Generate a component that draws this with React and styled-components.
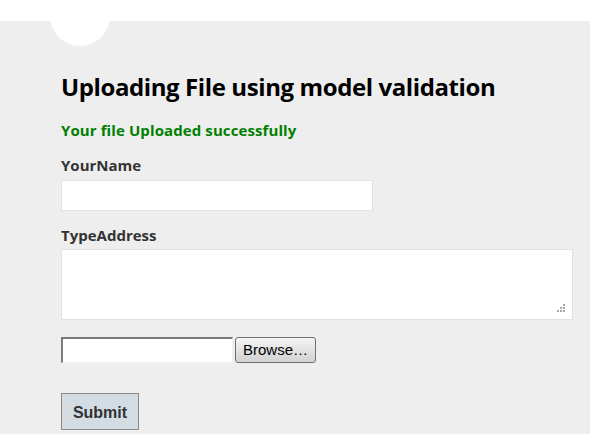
import React from "react";
import styled, { createGlobalStyle } from "styled-components";

const Global = createGlobalStyle`
  html, body { margin: 0; padding: 0; background: #eeeeee; }
  body { font-family: "Open Sans", "Noto Sans", sans-serif; }
`;

const Header = styled.header`
  position: relative;
  height: 21px;
  background: #ffffff;
`;

const Logo = styled.div`
  position: absolute;
  left: 50px;
  top: -14px;
  width: 60px;
  height: 60px;
  border-radius: 50%;
  background: #ffffff;
`;

const Main = styled.main`
  padding: 48px 18px 0 61px;
  display: flex;
  flex-direction: column;
  align-items: flex-start;
`;

const Title = styled.h2`
  margin: 0;
  font-size: 24px;
  line-height: 36px;
  font-weight: 700;
  color: #000;
  letter-spacing: -0.4px;
`;

const Success = styled.p`
  margin: 15px 0 0;
  font-size: 15px;
  line-height: 20px;
  font-weight: 700;
  color: #008000;
  letter-spacing: 0.1px;
`;

const Label = styled.label`
  display: block;
  margin-top: ${(p) => p.$top || 0}px;
  font-size: 15px;
  line-height: 20px;
  font-weight: 700;
  color: #333333;
`;

const TextBox = styled.input`
  box-sizing: border-box;
  margin-top: 5px;
  width: 312px;
  height: 31px;
  border: 1px solid #e2e2e2;
  background: #fff;
  outline: none;
`;

const AreaWrap = styled.div`
  position: relative;
  margin-top: 4px;
  width: 512px;
  height: 71px;
`;

const TextArea = styled.textarea`
  display: block;
  box-sizing: border-box;
  width: 100%;
  height: 100%;
  margin: 0;
  border: 1px solid #e2e2e2;
  background: #fff;
  outline: none;
  resize: none;
`;

const Grip = styled.svg`
  position: absolute;
  right: 7px;
  bottom: 7px;
  width: 10px;
  height: 10px;
  pointer-events: none;
`;

const FileRow = styled.div`
  display: flex;
  align-items: stretch;
  gap: 2px;
  margin-top: 17px;
  height: 26px;
`;

const FileField = styled.div`
  box-sizing: border-box;
  width: 172px;
  background: #fff;
  border-top: 2px solid #7a7a7a;
  border-left: 2px solid #7a7a7a;
  border-right: 1px solid #f2f2f2;
  border-bottom: 1px solid #f2f2f2;
`;

const BrowseButton = styled.button`
  box-sizing: border-box;
  width: 81px;
  height: 26px;
  padding: 0 0 2px;
  font-family: "Liberation Sans", Arial, sans-serif;
  font-size: 15px;
  color: #000;
  border: 1px solid #707070;
  border-radius: 3px;
  background: linear-gradient(#f4f4f4, #e2e2e2 50%, #d2d2d2);
`;

const SubmitButton = styled.button`
  box-sizing: border-box;
  margin-top: 30px;
  width: 78px;
  height: 37px;
  font-family: "Liberation Sans", Arial, sans-serif;
  font-size: 16px;
  font-weight: 700;
  color: #333;
  background: #d3dce3;
  border: 1px solid #8a8a8a;
  padding: 2px 0 0;
`;

export default function App() {
  return (
    <>
      <Global />
      <Header>
        <Logo />
      </Header>
      <Main>
        <Title>Uploading File using model validation</Title>
        <Success>Your file Uploaded successfully</Success>
        <Label $top={15}>YourName</Label>
        <TextBox type="text" />
        <Label $top={14}>TypeAddress</Label>
        <AreaWrap>
          <TextArea />
          <Grip viewBox="0 0 10 10">
            <g fill="#a8a8a8">
              <rect x="7" y="1" width="2" height="2" />
              <rect x="4" y="4" width="2" height="2" />
              <rect x="7" y="4" width="2" height="2" />
              <rect x="1" y="7" width="2" height="2" />
              <rect x="4" y="7" width="2" height="2" />
              <rect x="7" y="7" width="2" height="2" />
            </g>
          </Grip>
        </AreaWrap>
        <FileRow>
          <FileField />
          <BrowseButton type="button">Browse…</BrowseButton>
        </FileRow>
        <SubmitButton type="button">Submit</SubmitButton>
      </Main>
    </>
  );
}
